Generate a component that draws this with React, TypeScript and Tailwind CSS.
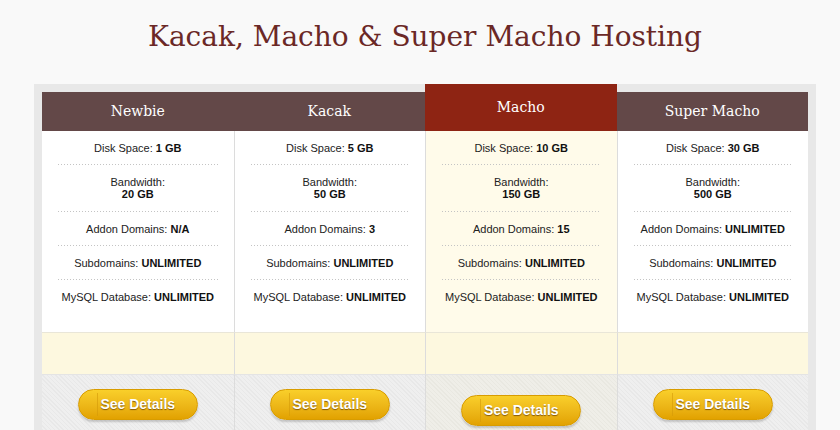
import type { FC } from 'react';

interface Plan {
  name: string;
  disk: string;
  bandwidth: string;
  addon: string;
  featured?: boolean;
}

const plans: Plan[] = [
  { name: 'Newbie', disk: '1 GB', bandwidth: '20 GB', addon: 'N/A' },
  { name: 'Kacak', disk: '5 GB', bandwidth: '50 GB', addon: '3' },
  { name: 'Macho', disk: '10 GB', bandwidth: '150 GB', addon: '15', featured: true },
  { name: 'Super Macho', disk: '30 GB', bandwidth: '500 GB', addon: 'UNLIMITED' },
];

// dotted rule between feature rows
const Dots: FC = () => (
  <div className="mx-4 h-px bg-[repeating-linear-gradient(90deg,#c4c4c4_0px,#c4c4c4_1px,transparent_1px,transparent_3px)]" />
);

const Feature: FC<{ label: string; value: string; stacked?: boolean; last?: boolean }> = ({ label, value, stacked, last }) => (
  <>
    <div className={`pt-[11px] ${stacked ? 'pb-[11px]' : 'pb-[10px]'} text-center`}>
      {stacked ? (
        <>
          <div>{label}</div>
          <div className="font-bold text-[#111]">{value}</div>
        </>
      ) : (
        <div>
          {label} <span className="font-bold text-[#111]">{value}</span>
        </div>
      )}
    </div>
    {!last && <Dots />}
  </>
);

const SeeDetails: FC = () => (
  <button className="relative w-[120px] h-[31px] rounded-full border border-[#d89c00] bg-gradient-to-b from-[#f9cf2a] to-[#e2a200] shadow-[0_2px_2px_rgba(0,0,0,0.18)] text-white font-bold text-[14px] [text-shadow:0_1px_1px_rgba(90,50,0,0.7)]">
    <span className="absolute left-[18px] top-[3px] bottom-[3px] w-px bg-[#d49a08] opacity-60" />
    See Details
  </button>
);

const PlanColumn: FC<{ plan: Plan; index: number }> = ({ plan, index }) => {
  const sep = index > 0 ? 'border-l border-[#dcdcdc]' : '';
  return (
    <div className="flex flex-col">
      <div
        className={
          plan.featured
            ? 'h-[47px] bg-[#8e2413] flex items-center justify-center text-white'
            : 'mt-2 h-[39px] bg-[#634848] flex items-center justify-center text-white'
        }
        style={{ fontFamily: '"DejaVu Serif", serif' }}
      >
        <span className="text-[14px]">{plan.name}</span>
      </div>
      <div className={`${sep} ${plan.featured ? 'bg-[#fffbea]' : 'bg-white'} pb-[19px] text-[11px] leading-[12px] text-[#222]`}>
        <Feature label="Disk Space:" value={plan.disk} />
        <Feature label="Bandwidth:" value={plan.bandwidth} stacked />
        <Feature label="Addon Domains:" value={plan.addon} />
        <Feature label="Subdomains:" value="UNLIMITED" />
        <Feature label="MySQL Database:" value="UNLIMITED" last />
      </div>
      <div className={`${sep} h-[42px] border-t border-t-[#e9e6d8] bg-[#fdf8df]`} />
      <div
        className={`${sep} flex-1 flex justify-center border-t border-t-[#e4e4e4] ${plan.featured ? 'pt-[20px] bg-[repeating-linear-gradient(45deg,#efeee8_0px,#efeee8_2px,#e9e8e1_2px,#e9e8e1_3px)]' : 'pt-[14px] bg-[repeating-linear-gradient(45deg,#efefef_0px,#efefef_2px,#e8e8e8_2px,#e8e8e8_3px)]'}`}
      >
        <div className="h-[31px]">
          <SeeDetails />
        </div>
      </div>
    </div>
  );
};

export default function App() {
  return (
    <div className="w-[840px] h-[430px] overflow-hidden bg-[#f9f9f9]" style={{ fontFamily: '"Liberation Sans", Arial, sans-serif' }}>
      <div className="ml-[34px] w-[782px]">
        <h1
          className="h-[84px] pt-[19px] text-center text-[28px] leading-[36px] text-[#6b2826]"
          style={{ fontFamily: '"DejaVu Serif", serif' }}
        >
          Kacak, Macho &amp; Super Macho Hosting
        </h1>
        <div className="bg-[#e8e8e8] px-2 h-[400px]">
          <div className="grid grid-cols-4 h-full">
            {plans.map((p, i) => (
              <PlanColumn key={p.name} plan={p} index={i} />
            ))}
          </div>
        </div>
      </div>
    </div>
  );
}
